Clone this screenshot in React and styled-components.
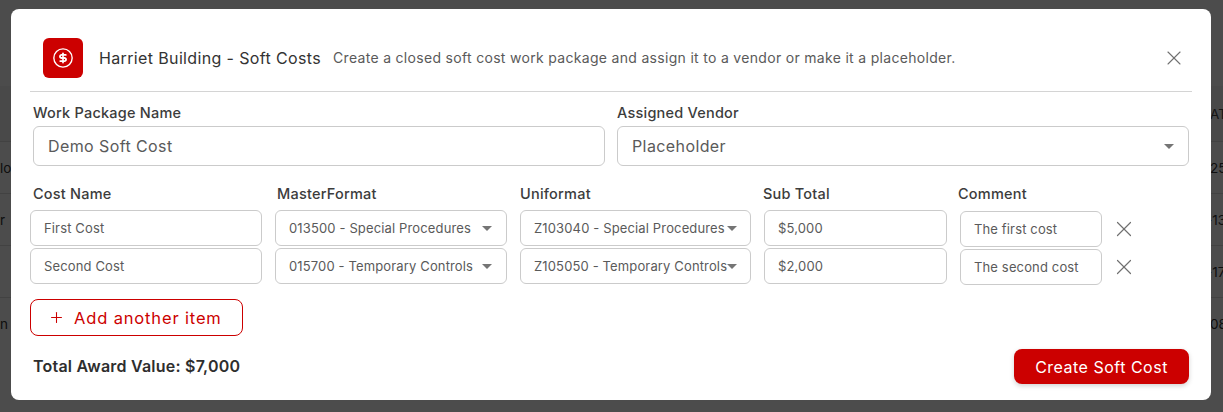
import React from 'react';
import styled, { createGlobalStyle } from 'styled-components';
import { Plus, X } from 'lucide-react';

const RED = '#cc0000';
const FONT = `Inter, "Noto Sans", "Liberation Sans", sans-serif`;

const GlobalStyle = createGlobalStyle`
  html, body { margin: 0; padding: 0; height: 100%; background: #fff; overflow: hidden; }
  #root { height: 100%; }
  * { box-sizing: border-box; }
  body { font-family: ${FONT}; color: #333; }
`;

/* page behind the modal, only its edges show */
const Page = styled.div`
  height: 412px;
  padding-top: 86px;
  background: #fff;
`;

const TableHead = styled.div`
  height: 55px;
  background: #f3f3f3;
  display: flex;
  justify-content: flex-end;
  align-items: center;
  font-size: 13.5px;
  color: #444;
`;

const TableRow = styled.div`
  height: 52px;
  border-top: 1px solid #ddd;
  display: flex;
  justify-content: space-between;
  align-items: center;
  font-size: 13.5px;
  color: #333;
  overflow: hidden;
`;

const RightCell = styled.span`
  width: ${p => p.$width || 13}px;
  flex: none;
  white-space: nowrap;
`;

const Overlay = styled.div`
  position: fixed;
  inset: 0;
  background: rgba(0, 0, 0, 0.7);
  padding: 9px 12px 12px 11px;
`;

const Modal = styled.div`
  width: 1200px;
  height: 391px;
  background: #fff;
  border-radius: 8px;
  padding: 0 19px;
  display: flex;
  flex-direction: column;
`;

const Header = styled.header`
  height: 83px;
  flex: none;
  border-bottom: 1px solid #d4d4d4;
  padding: 15px 5px 0 13px;
  display: flex;
  align-items: center;
`;

const IconTile = styled.div`
  width: 40px;
  height: 40px;
  border-radius: 6px;
  background: ${RED};
  color: #fff;
  display: flex;
  align-items: center;
  justify-content: center;
  flex: none;
`;

const Title = styled.h2`
  margin: 0 12px 0 16px;
  font-size: 16px;
  font-weight: 400;
  letter-spacing: 0.36px;
  color: #333;
  white-space: nowrap;
`;

const Subtitle = styled.p`
  margin: 0;
  flex: 1;
  font-size: 14px;
  letter-spacing: 0.31px;
  color: #5a5a5a;
  white-space: nowrap;
`;

const IconButton = styled.button`
  border: 0;
  padding: 0;
  background: none;
  color: #707070;
  display: flex;
  align-items: center;
  justify-content: center;
  width: 26px;
  height: 26px;
  flex: none;
`;

const TopFields = styled.div`
  display: grid;
  grid-template-columns: 572px 572px;
  column-gap: 12px;
  padding: 12px 0 0 3px;
`;

const Field = styled.label`
  display: flex;
  flex-direction: column;
`;

const Label = styled.span`
  display: block;
  font-size: 14.5px;
  line-height: 17px;
  font-weight: 500;
  letter-spacing: 0.22px;
  color: #3c3c3c;
  white-space: nowrap;
  padding-left: ${p => p.$indent || 0}px;
  margin-left: ${p => p.$shift || 0}px;
`;

const Control = styled.div`
  position: relative;
  width: 100%;
  height: ${p => (p.$large ? 40 : 36)}px;
  margin-top: ${p => p.$top || 0}px;
  border: 1px solid #cbcbcb;
  border-radius: 6px;
  background: #fff;
  display: flex;
  align-items: center;
`;

const Value = styled.input`
  width: 100%;
  height: 100%;
  border: 0;
  outline: 0;
  padding: 0 ${p => p.$right || 10}px 0 ${p => (p.$large ? 14 : 13)}px;
  background: none;
  font-family: ${FONT};
  font-size: ${p => (p.$large ? 16 : 13)}px;
  letter-spacing: ${p => (p.$large ? 0.4 : 0.14)}px;
  color: #5a5a5a;
  text-overflow: clip;
`;

const Caret = styled.span`
  position: absolute;
  right: ${p => p.$right}px;
  top: 50%;
  margin-top: -2px;
  width: 0;
  height: 0;
  border-left: 5px solid transparent;
  border-right: 5px solid transparent;
  border-top: 5px solid #757575;
`;

const LabelRow = styled.div`
  display: grid;
  grid-template-columns: 232px 232px 231px 183px 142px;
  column-gap: 13px;
  margin-top: 19px;
  height: 15px;
`;

const CostGrid = styled.div`
  display: grid;
  grid-template-columns: 232px 232px 231px 183px 142px 44px;
  grid-auto-rows: 36px;
  column-gap: 13px;
  row-gap: 2px;
  margin-top: 10px;
  align-items: start;
`;

const CommentControl = styled(Control)`
  margin-top: 1px;
`;

const RemoveCell = styled.div`
  height: 36px;
  margin-top: 1px;
  display: flex;
  align-items: center;
  margin-left: -4px;
`;

const AddButton = styled.button`
  align-self: flex-start;
  width: 213px;
  height: 37px;
  margin-top: 15px;
  border: 1px solid ${RED};
  border-radius: 8px;
  background: #fff;
  color: ${RED};
  font-family: ${FONT};
  font-size: 16.5px;
  letter-spacing: 0.85px;
  display: flex;
  align-items: center;
  gap: 9px;
  padding: 0 0 0 17px;
  white-space: nowrap;
`;

const Footer = styled.footer`
  display: flex;
  justify-content: space-between;
  align-items: center;
  margin-top: 13px;
  padding: 0 3px;
`;

const Total = styled.div`
  font-size: 16px;
  font-weight: 600;
  letter-spacing: 0.22px;
  color: #2e2e2e;
  margin-top: -2px;
`;

const SubmitButton = styled.button`
  width: 175px;
  height: 35px;
  border: 0;
  border-radius: 8px;
  background: ${RED};
  color: #fff;
  font-family: ${FONT};
  font-size: 16px;
  letter-spacing: 0.5px;
  box-shadow: 0 2px 5px rgba(0, 0, 0, 0.18);
`;

const rows = [
  { name: 'First Cost', master: '013500 - Special Procedures', uni: 'Z103040 - Special Procedures', sub: '$5,000', comment: 'The first cost' },
  { name: 'Second Cost', master: '015700 - Temporary Controls', uni: 'Z105050 - Temporary Controls', sub: '$2,000', comment: 'The second cost' },
];

const behind = [
  ['lo', '25', 13],
  ['r', '-13', 17],
  ['', '-17', 17],
  ['n', '08', 13],
];

const Background = () => (
  <Page>
    <TableHead><RightCell>AT</RightCell></TableHead>
    {behind.map(([l, r, w], i) => (
      <TableRow key={i}>
        <span>{l}</span>
        <RightCell $width={w}>{r}</RightCell>
      </TableRow>
    ))}
  </Page>
);

const DollarIcon = () => (
  <svg width="22" height="22" viewBox="0 0 24 24" fill="none" stroke="currentColor" strokeLinecap="round" strokeLinejoin="round">
    <circle cx="12" cy="12" r="10" strokeWidth="1.5" />
    <path d="M15 8.6h-4.6a1.7 1.7 0 1 0 0 3.4h3.2a1.7 1.7 0 1 1 0 3.4H9" strokeWidth="2" />
    <path d="M12 6.8v10.4" strokeWidth="1.8" />
  </svg>
);

const SelectControl = ({ value, caret = 14, right = 30 }) => (
  <Control>
    <Value readOnly value={value} $right={right} />
    <Caret $right={caret} />
  </Control>
);

export default function App() {
  return (
    <>
      <GlobalStyle />
      <Background />
      <Overlay>
        <Modal>
          <Header>
            <IconTile><DollarIcon /></IconTile>
            <Title>Harriet Building - Soft Costs</Title>
            <Subtitle>Create a closed soft cost work package and assign it to a vendor or make it a placeholder.</Subtitle>
            <IconButton aria-label="Close"><X size={24} strokeWidth={1.1} /></IconButton>
          </Header>

          <TopFields>
            <Field>
              <Label>Work Package Name</Label>
              <Control $large $top={5}><Value $large readOnly value="Demo Soft Cost" /></Control>
            </Field>
            <Field>
              <Label>Assigned Vendor</Label>
              <Control $large $top={5}>
                <Value $large readOnly value="Placeholder" />
                <Caret $right={14} />
              </Control>
            </Field>
          </TopFields>

          <LabelRow>
            <Label $indent={3}>Cost Name</Label>
            <Label $indent={2}>MasterFormat</Label>
            <Label>Uniformat</Label>
            <Label $shift={-1}>Sub Total</Label>
            <Label $shift={-2}>Comment</Label>
          </LabelRow>
          <CostGrid>
            {rows.map(r => (
              <React.Fragment key={r.name}>
                <Control><Value readOnly value={r.name} /></Control>
                <SelectControl value={r.master} />
                <SelectControl value={r.uni} caret={13} right={22} />
                <Control><Value readOnly value={r.sub} /></Control>
                <CommentControl><Value readOnly value={r.comment} /></CommentControl>
                <RemoveCell>
                  <IconButton aria-label="Remove"><X size={26} strokeWidth={1.1} /></IconButton>
                </RemoveCell>
              </React.Fragment>
            ))}
          </CostGrid>

          <AddButton><Plus size={17} strokeWidth={1.5} />Add another item</AddButton>

          <Footer>
            <Total>Total Award Value: $7,000</Total>
            <SubmitButton>Create Soft Cost</SubmitButton>
          </Footer>
        </Modal>
      </Overlay>
    </>
  );
}
